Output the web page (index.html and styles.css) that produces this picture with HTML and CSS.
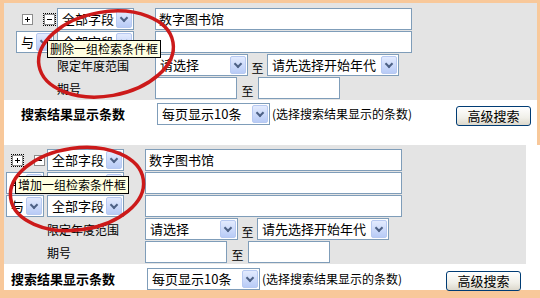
FILE: index.html
```html
<!DOCTYPE html>
<html lang="zh-CN">
<head>
  <meta charset="UTF-8" />
  <title>高级检索</title>
  <link rel="stylesheet" href="styles.css">
</head>
<body>
  <section class="panel panel-top">
    <div class="form-area">
      <div class="row">
        <div class="lead toggles"><span class="box plus"></span><span class="box minus focus"></span></div>
        <div class="field-col"><div class="select field"><span class="value">全部字段</span><span class="arrow"></span></div></div>
        <div class="text">数字图书馆</div>
      </div>
      <div class="row">
        <div class="lead"><div class="select join"><span class="value">与</span><span class="arrow"></span></div></div>
        <div class="field-col"><div class="select field"><span class="value">全部字段</span><span class="arrow"></span></div></div>
        <div class="text"></div>
      </div>
      <div class="row range">
        <div class="label">限定年度范围</div>
        <div class="select year-from"><span class="value">请选择</span><span class="arrow"></span></div>
        <div class="to to-year">至</div>
        <div class="select year-to"><span class="value">请先选择开始年代</span><span class="arrow"></span></div>
      </div>
      <div class="row range">
        <div class="label">期号</div>
        <div class="text period"></div>
        <div class="to to-period">至</div>
        <div class="text period"></div>
      </div>
    </div>
    <div class="footer">
      <div class="footer-label">搜索结果显示条数</div>
      <div class="select per-page"><span class="value">每页显示10条</span><span class="arrow"></span></div>
      <div class="note">(选择搜索结果显示的条数)</div>
      <div class="search-btn">高级搜索</div>
    </div>
  </section>

  <section class="panel panel-bottom">
    <div class="form-area">
      <div class="row">
        <div class="lead toggles"><span class="box plus focus"></span><span class="box minus"></span></div>
        <div class="field-col"><div class="select field"><span class="value">全部字段</span><span class="arrow"></span></div></div>
        <div class="text">数字图书馆</div>
      </div>
      <div class="row">
        <div class="lead"><div class="select join"><span class="value">与</span><span class="arrow"></span></div></div>
        <div class="field-col"><div class="select field"><span class="value">全部字段</span><span class="arrow"></span></div></div>
        <div class="text"></div>
      </div>
      <div class="row">
        <div class="lead"><div class="select join"><span class="value">与</span><span class="arrow"></span></div></div>
        <div class="field-col"><div class="select field"><span class="value">全部字段</span><span class="arrow"></span></div></div>
        <div class="text"></div>
      </div>
      <div class="row range">
        <div class="label">限定年度范围</div>
        <div class="select year-from"><span class="value">请选择</span><span class="arrow"></span></div>
        <div class="to to-year">至</div>
        <div class="select year-to"><span class="value">请先选择开始年代</span><span class="arrow"></span></div>
      </div>
      <div class="row range">
        <div class="label">期号</div>
        <div class="text period"></div>
        <div class="to to-period">至</div>
        <div class="text period"></div>
      </div>
    </div>
    <div class="footer">
      <div class="footer-label">搜索结果显示条数</div>
      <div class="select per-page"><span class="value">每页显示10条</span><span class="arrow"></span></div>
      <div class="note">(选择搜索结果显示的条数)</div>
      <div class="search-btn">高级搜索</div>
    </div>
  </section>

  <div class="tip tip-top">删除一组检索条件框</div>
  <div class="tip tip-bottom">增加一组检索条件框</div>

  <svg class="marks" width="540" height="298" viewBox="0 0 540 298">
    <ellipse cx="106" cy="54" rx="68" ry="42" transform="rotate(-10 106 54)" />
    <ellipse cx="77" cy="189" rx="67" ry="41" transform="rotate(-8 77 189)" />
  </svg>
</body>
</html>
```
FILE: styles.css
```css
* {
  margin: 0;
  padding: 0;
  box-sizing: border-box;
}

body {
  position: relative;
  width: 540px;
  height: 298px;
  overflow: hidden;
  background: #fff;
  color: #000;
  font-family: "Noto Sans CJK SC", sans-serif;
  font-size: 13px;
}

.panel {
  border-left: 4px solid #f8c89a;
}

.panel-top {
  border-top: 3px solid #f8c89a;
  border-right: 3px solid #f8c89a;
}

.panel-bottom {
  border-bottom: 8px solid #f8c89a;
}

.form-area {
  display: flex;
  flex-direction: column;
  gap: 1px;
  background: #e4e4e4;
}

.panel-top .form-area {
  padding: 5px 0 1px 12px;
}

.panel-bottom .form-area {
  width: 522px;
  padding: 4px 0 1px 2px;
}

.row {
  display: flex;
  align-items: center;
  height: 22px;
}

.range {
  padding-left: 41px;
}

.lead {
  flex: none;
  width: 41px;
  height: 100%;
  display: flex;
  align-items: center;
}

.toggles {
  padding-left: 6px;
  gap: 11px;
}

.box {
  position: relative;
  width: 11px;
  height: 11px;
  border: 1px solid #8c8c8c;
  background: #fff;
}

.box::before {
  content: "";
  position: absolute;
  left: 2px;
  top: 4px;
  width: 5px;
  height: 1px;
  background: #000;
}

.plus::after {
  content: "";
  position: absolute;
  left: 4px;
  top: 2px;
  width: 1px;
  height: 5px;
  background: #000;
}

.focus {
  outline: 1px dotted #000;
  outline-offset: 0;
}

.field-col {
  flex: none;
  width: 98px;
}

.select {
  flex: none;
  display: flex;
  align-items: center;
  height: 22px;
  border: 1px solid #7f9db9;
  background: #fff;
}

.select .value {
  flex: 1;
  padding-left: 4px;
  white-space: nowrap;
  overflow: hidden;
  line-height: 20px;
}

.arrow {
  position: relative;
  flex: none;
  width: 16px;
  height: 18px;
  margin-right: 1px;
  border: 1px solid #b7c9f1;
  border-radius: 2px;
  background: linear-gradient(#e3ebfe, #b8cbf6);
}

.arrow::after {
  content: "";
  position: absolute;
  left: 4px;
  top: 4px;
  width: 4px;
  height: 4px;
  border-right: 2px solid #4d6185;
  border-bottom: 2px solid #4d6185;
  transform: rotate(45deg);
}

.field {
  width: 77px;
}

.join {
  width: 38px;
}

.text {
  flex: none;
  width: 257px;
  height: 22px;
  border: 1px solid #7f9db9;
  background: #fff;
  padding-left: 3px;
  line-height: 20px;
}

.label {
  flex: none;
  width: 98px;
  font-size: 12px;
}

.year-from {
  width: 93px;
}

.year-to {
  width: 132px;
}

.period {
  width: 82px;
}

.to {
  flex: none;
  text-align: center;
  font-size: 12px;
  padding-top: 4px;
}

.to-year {
  width: 19px;
}

.to-period {
  width: 21px;
}

.footer {
  display: flex;
  align-items: flex-start;
  background: #fff;
}

.panel-top .footer {
  height: 45px;
  padding: 3px 6px 0 17px;
}

.panel-bottom .footer {
  height: 26px;
  padding: 4px 19px 0 7px;
}

.footer-label {
  flex: none;
  width: 136px;
  font-weight: bold;
  line-height: 22px;
}

.per-page {
  width: 113px;
}

.note {
  margin-left: 2px;
  font-size: 12px;
  line-height: 22px;
  white-space: nowrap;
}

.search-btn {
  flex: none;
  margin-left: auto;
  margin-top: 3px;
  width: 75px;
  height: 20px;
  border: 1px solid #003c74;
  border-radius: 3px;
  background: linear-gradient(#ffffff, #f0efe8 60%, #dcd8cc);
  text-align: center;
  line-height: 18px;
}

.tip {
  position: absolute;
  height: 18px;
  padding: 0 2px;
  border: 1px solid #000;
  background: #ffffe1;
  font-size: 12px;
  line-height: 16px;
  white-space: nowrap;
}

.tip-top {
  left: 47px;
  top: 40px;
}

.tip-bottom {
  left: 15px;
  top: 176px;
}

.marks {
  position: absolute;
  left: 0;
  top: 0;
  pointer-events: none;
}

.marks ellipse {
  fill: none;
  stroke: #cc1a1a;
  stroke-width: 3.5;
}
```
